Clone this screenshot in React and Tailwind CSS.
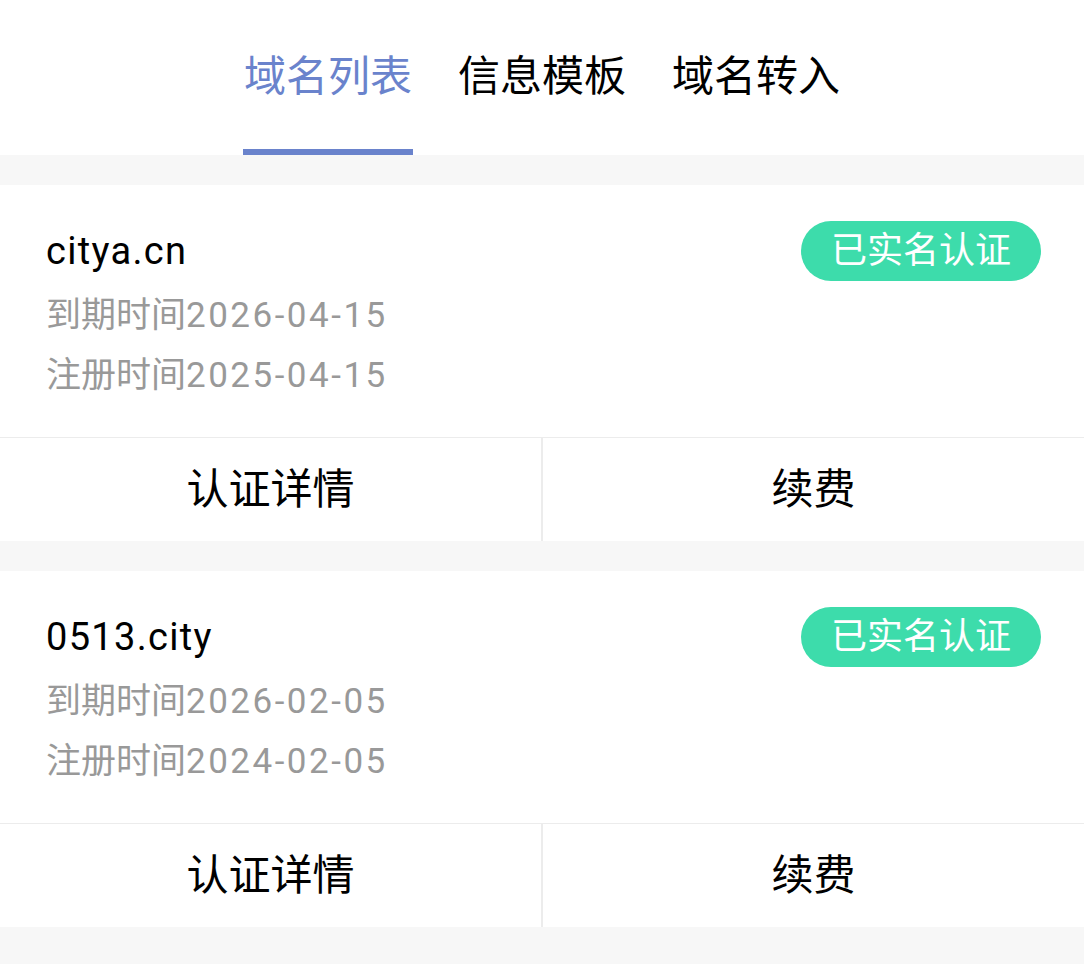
import React from 'react'

const tabs = ['域名列表', '信息模板', '域名转入']

const domains = [
  { name: 'citya.cn', expire: '2026-04-15', register: '2025-04-15' },
  { name: '0513.city', expire: '2026-02-05', register: '2024-02-05' },
]

function DomainCard({ domain }) {
  return (
    <div className="bg-white">
      <div className="pl-[46px] pr-[43px] pt-[36px] pb-[31px]">
        <div className="flex items-center justify-between h-[60px]">
          <span className="text-[38px] text-black leading-none tracking-[1.3px]">{domain.name}</span>
          <span className="h-[60px] w-[240px] rounded-full bg-[#3ddcab] text-white text-[36px] flex items-center justify-center">
            已实名认证
          </span>
        </div>
        <div className="text-[35px] text-[#999999] leading-[60px] mt-[5px]">
          到期时间<span className="tracking-[2.5px]">{domain.expire}</span>
        </div>
        <div className="text-[35px] text-[#999999] leading-[60px]">
          注册时间<span className="tracking-[2.5px]">{domain.register}</span>
        </div>
      </div>
      <div className="flex border-t border-[#ececec] h-[104px]">
        <button className="flex-1 flex items-center justify-center text-[42px] text-black border-r-2 border-[#ececec]">
          认证详情
        </button>
        <button className="flex-1 flex items-center justify-center text-[42px] text-black">
          续费
        </button>
      </div>
    </div>
  )
}

export default function App() {
  return (
    <div
      className="w-[1084px] min-h-[964px] bg-[#f7f7f7]"
      style={{ fontFamily: 'Roboto, "Noto Sans CJK SC", sans-serif' }}
    >
      <div className="bg-white h-[155px] flex justify-center gap-[46px]">
        {tabs.map((tab, i) => (
          <div key={tab} className="relative flex flex-col items-center">
            <span
              className={`text-[42px] leading-none mt-[56px] ${i === 0 ? 'text-[#6a83cc]' : 'text-black'}`}
            >
              {tab}
            </span>
            {i === 0 && (
              <span className="absolute bottom-0 left-[-1px] right-[-1px] h-[6px] bg-[#6a83cc]" />
            )}
          </div>
        ))}
      </div>
      <div className="flex flex-col gap-[30px] pt-[30px]">
        {domains.map((d) => (
          <DomainCard key={d.name} domain={d} />
        ))}
      </div>
    </div>
  )
}
